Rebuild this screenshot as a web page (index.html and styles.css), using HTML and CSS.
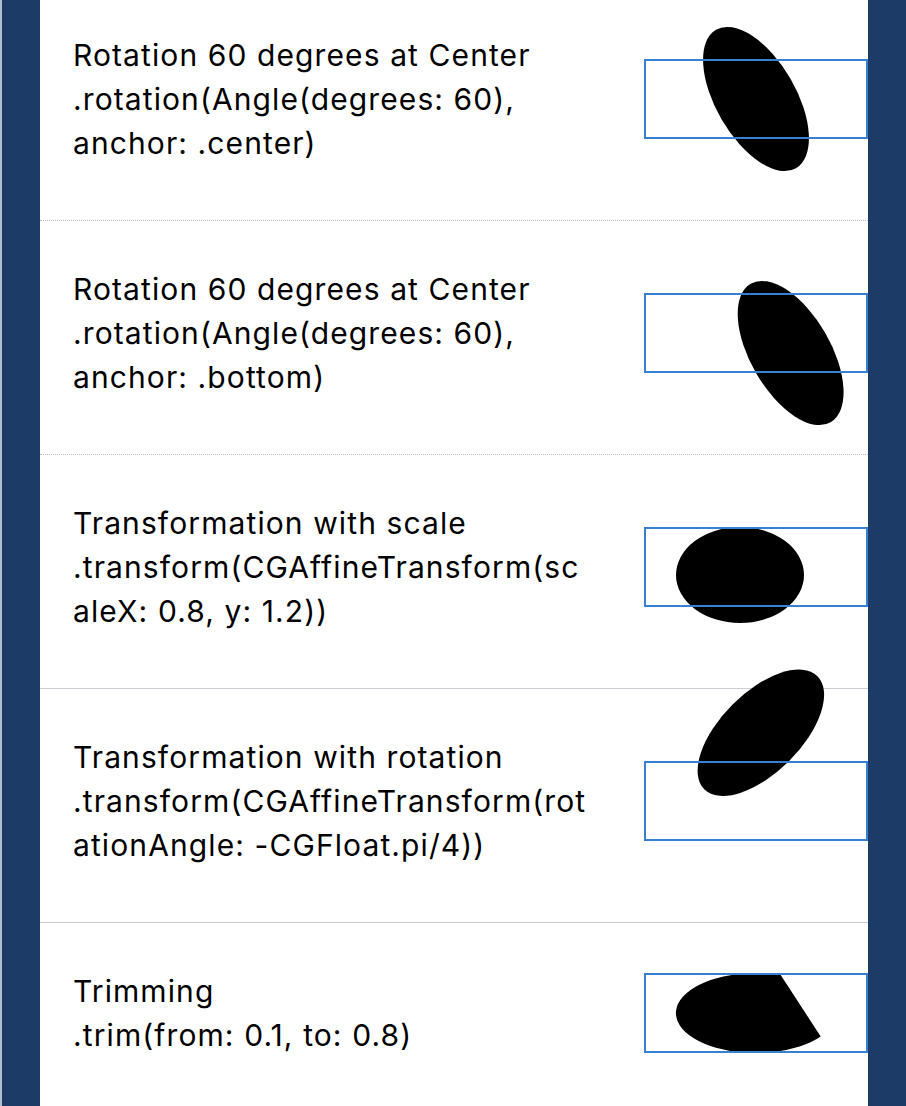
FILE: index.html
```html
<!DOCTYPE html>
<html lang="en">
<head>
<meta charset="utf-8">
<title>Shape transforms</title>
<link rel="stylesheet" href="styles.css">
</head>
<body>
<div class="screen">
  <div class="side side-left"></div>
  <main class="list">
    <section class="row row-first dotted">
      <div class="label">Rotation 60 degrees at Center<br>.rotation(Angle(degrees: 60),<br>anchor: .center)</div>
      <div class="stage">
        <div class="shape rot-center"></div>
        <div class="frame"></div>
      </div>
    </section>
    <section class="row dotted">
      <div class="label">Rotation 60 degrees at Center<br>.rotation(Angle(degrees: 60),<br>anchor: .bottom)</div>
      <div class="stage">
        <div class="shape rot-bottom"></div>
        <div class="frame"></div>
      </div>
    </section>
    <section class="row solid">
      <div class="label">Transformation with scale<br>.transform(CGAffineTransform(sc<br>aleX: 0.8, y: 1.2))</div>
      <div class="stage">
        <div class="shape scaled"></div>
        <div class="frame"></div>
      </div>
    </section>
    <section class="row solid">
      <div class="label">Transformation with rotation<br>.transform(CGAffineTransform(rot<br>ationAngle: -CGFloat.pi/4))</div>
      <div class="stage">
        <div class="shape rotated"></div>
        <div class="frame"></div>
      </div>
    </section>
    <section class="row">
      <div class="label">Trimming<br>.trim(from: 0.1, to: 0.8)</div>
      <div class="stage">
        <svg class="trim" viewBox="0 0 224 80" width="224" height="80" aria-hidden="true">
          <path d="M176.7 63.5 A80 40 0 1 1 136.7 2 Z" fill="#000"/>
        </svg>
        <div class="frame"></div>
      </div>
    </section>
  </main>
  <div class="side side-right"></div>
</div>
</body>
</html>
```

FILE: styles.css
```css
html, body {
  margin: 0;
  padding: 0;
  background: #ffffff;
}

.screen {
  display: flex;
  width: 906px;
  height: 1106px;
  overflow: hidden;
}

.side {
  flex: 0 0 auto;
  background: #1c3b67;
}

.side-left {
  width: 38px;
  border-left: 2px solid #b4bfcd;
}

.side-right {
  width: 38px;
}

.list {
  flex: 1 1 auto;
  min-width: 0;
  background: #ffffff;
  display: flex;
  flex-direction: column;
}

.row {
  display: flex;
  align-items: center;
  padding: 46px 0 55px 33px;
  flex-shrink: 0;
}

.row-first {
  padding-top: 33px;
}

.row.dotted {
  border-bottom: 1px dotted #b9b9b9;
}

.row.solid {
  border-bottom: 1px solid #c9cdd3;
}

.label {
  flex: 1 1 auto;
  min-width: 0;
  font-family: Inter, "Noto Sans", sans-serif;
  font-size: 30px;
  letter-spacing: 1.1px;
  line-height: 44px;
  color: #000;
  white-space: nowrap;
}

.stage {
  position: relative;
  flex: 0 0 224px;
  width: 224px;
  height: 80px;
}

.frame {
  position: absolute;
  inset: 0;
  border: 2px solid #3880d3;
  box-sizing: border-box;
  z-index: 2;
}

.shape {
  position: absolute;
  left: 32px;
  top: 0;
  width: 160px;
  height: 80px;
  border-radius: 50%;
  background: #000;
}

.rot-center {
  transform: rotate(60deg);
}

.rot-bottom {
  transform-origin: 50% 100%;
  transform: rotate(60deg);
}

.scaled {
  transform-origin: 0 0;
  transform: scale(0.8, 1.2);
}

.rotated {
  transform-origin: 0 0;
  transform: rotate(-45deg);
}

.trim {
  position: absolute;
  left: 0;
  top: 0;
  display: block;
}
```
